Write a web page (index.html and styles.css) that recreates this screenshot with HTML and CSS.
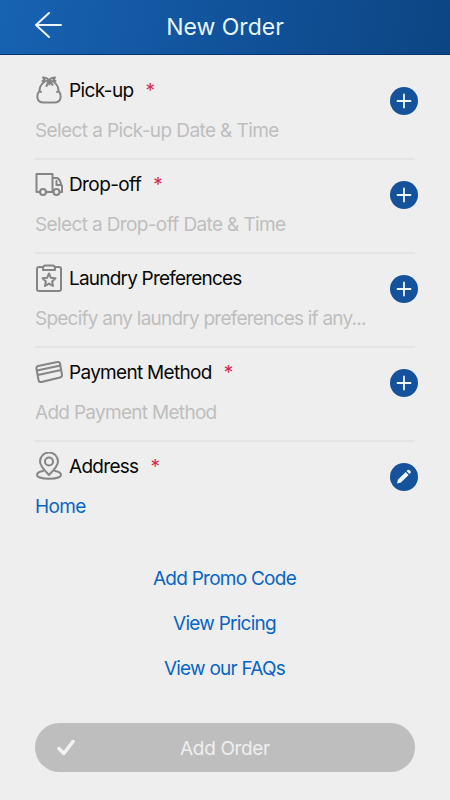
FILE: index.html
```html
<!DOCTYPE html>
<html lang="en">
<head>
<meta charset="utf-8">
<title>New Order</title>
<link rel="stylesheet" href="styles.css">
</head>
<body>
<header class="header">
  <svg class="back" viewBox="0 0 28 28"><path d="M15 2 2 14l13 12M2 14h25"/></svg>
  <h1>New Order</h1>
</header>
<main>
  <section class="row">
    <div class="title">
      <svg class="icon" viewBox="0 0 28 28"><path d="M9.500 6C6 8 4.500 10 4.500 15 2.500 17 2 19 2.500 22q1 4.500 6 4.500h11q5 0 6-4.500c.5-3 0-5-2-7C23.500 10 22 8 18.500 6M4.500 15l1.500 1M23.500 15 22 16M14 4Q11 1 8 1.500l1.500 2L7.500 5q3 1 6.500-1Q17 1 20 1.500L18.500 3.500 20.500 5q-3 1-6.500-1M14 4l-2.500 6M14 4l.5 4.500M14.500 4l3 5"/></svg>
      <h2>Pick-up</h2><span class="required">*</span>
    </div>
    <p class="hint">Select a Pick-up Date &amp; Time</p>
    <button class="action" aria-label="Add"><svg viewBox="0 0 28 28"><path d="M14 7.500v13M7.500 14h13"/></svg></button>
  </section>
  <section class="row">
    <div class="title">
      <svg class="icon" viewBox="0 0 28 28"><path d="M5 22H1.500V4h16v18H11M17.500 8H22q3 1 4 6l1 2v6h-2M17.500 22v-4M21.500 11v4H26"/><circle cx="8" cy="22" r="3"/><circle cx="21.500" cy="22" r="3"/></svg>
      <h2>Drop-off</h2><span class="required">*</span>
    </div>
    <p class="hint dropoff-hint">Select a Drop-off Date &amp; Time</p>
    <button class="action" aria-label="Add"><svg viewBox="0 0 28 28"><path d="M14 7.500v13M7.500 14h13"/></svg></button>
  </section>
  <section class="row">
    <div class="title">
      <svg class="icon" viewBox="0 0 28 28"><path d="M8 3H4Q2 3 2 5v20q0 2 2 2h20q2 0 2-2V5q0-2-2-2h-4M8 4q0-2.500 2.500-2.500h7Q20 1.500 20 4v2H8ZM14 9.500l1.900 4.300 4.600.5-3.400 3.100.9 4.600-4-2.400-4 2.400.9-4.600-3.400-3.100 4.600-.5Z"/></svg>
      <h2 class="preferences-title">Laundry Preferences</h2>
    </div>
    <p class="hint preferences-hint">Specify any laundry preferences if any...</p>
    <button class="action" aria-label="Add"><svg viewBox="0 0 28 28"><path d="M14 7.500v13M7.500 14h13"/></svg></button>
  </section>
  <section class="row">
    <div class="title">
      <svg class="icon" viewBox="0 0 28 28"><path d="m3 8 19.500-4q2-.5 2.500 1.500L27 17q0 2-2 2.500L6.500 24q-2.500.5-3-2L1.500 11Q1 8.500 3 8ZM2 12.500l23.500-5M3 17l23-5"/></svg>
      <h2 class="payment-title">Payment Method</h2><span class="required">*</span>
    </div>
    <p class="hint payment-hint">Add Payment Method</p>
    <button class="action" aria-label="Add"><svg viewBox="0 0 28 28"><path d="M14 7.500v13M7.500 14h13"/></svg></button>
  </section>
  <section class="row">
    <div class="title">
      <svg class="icon" viewBox="0 0 28 28"><path d="M14 23Q5 14 5 9.500a9 9 0 0 1 18 0Q23 14 14 23ZM8 19c-3 .5-6 1.500-6 4 0 5 24 5 24 0 0-2.500-3-3.500-6-4"/><circle cx="14" cy="9.500" r="4"/></svg>
      <h2 class="address-title">Address</h2><span class="required">*</span>
    </div>
    <p class="hint value">Home</p>
    <button class="action" aria-label="Edit"><svg viewBox="0 0 28 28"><path class="pencil" d="m7 20.500 1-4 7.700-7.500 2.900 2.900-7.600 7.600ZM16.600 8.100l1-1q1-.8 2 .1l.8.8q.9 1 .1 2l-1 1Z"/></svg></button>
  </section>
  <nav class="links">
    <a>Add Promo Code</a>
    <a>View Pricing</a>
    <a>View our FAQs</a>
  </nav>
  <button class="submit">
    <svg viewBox="0 0 18 18"><path d="m2 10.500 4.800 5L16 3.500"/></svg>
    <span>Add Order</span>
  </button>
</main>
</body>
</html>
```
FILE: styles.css
```css
* { box-sizing: border-box; }
body {
  margin: 0;
  height: 800px;
  overflow: hidden;
  background: #eee;
  color: #080808;
  font-family: Inter, "Liberation Sans", sans-serif;
  font-size: 19px;
  letter-spacing: -0.6px;
}
h1, h2, p { margin: 0; font-weight: 400; white-space: nowrap; }
svg { fill: none; stroke-linecap: round; stroke-linejoin: round; flex: none; }
button { border: 0; padding: 0; font: inherit; letter-spacing: inherit; }
.header {
  display: grid;
  grid-template-columns: 34px 1fr 34px;
  height: 55px;
  padding: 11px 34px 0;
  background: linear-gradient(100deg, #1762b2, #105096 60%, #0d4583);
  border-bottom: 1px solid #07346f;
}
.back { width: 28px; height: 28px; stroke: #e9f6ff; stroke-width: 2; }
.header h1 {
  color: #e9f6ff;
  text-align: center;
  font-size: 23px;
  line-height: 32px;
  letter-spacing: 0;
}
main { padding: 12px 34px 0 35px; }
.row {
  display: grid;
  grid-template-columns: 1fr 28px;
  grid-template-rows: 48px 32px;
  height: 94px;
  margin-right: -2px;
  background: linear-gradient(#e4e4e4, #e4e4e4) left bottom 1px / 380px 2px no-repeat;
}
.row:nth-of-type(5) { background: none; }
.title { display: flex; align-items: center; padding-bottom: 1px; }
.icon { width: 28px; height: 28px; margin-bottom: 2px; stroke: #858585; stroke-width: 2; }
h2 { margin-left: 6px; padding-top: 1px; font-size: 19px; line-height: 28px; }
.preferences-title { letter-spacing: -0.8px; }
.payment-title { letter-spacing: -0.7px; }
.address-title { letter-spacing: -0.7px; }
.required { margin-left: 12px; color: #d52b50; line-height: 28px; }
.hint { grid-column: 1; grid-row: 2; color: #bebebe; line-height: 32px; }
.dropoff-hint { letter-spacing: -0.63px; }
.preferences-hint { letter-spacing: -0.77px; }
.payment-hint { letter-spacing: -0.7px; }
.value { color: #0965c4; }
.action {
  grid-column: 2;
  grid-row: 1 / 3;
  width: 28px;
  height: 28px;
  margin-top: 19.500px;
  border-radius: 50%;
  background: #14539b;
}
.action svg { display: block; width: 28px; height: 28px; stroke: #eff9ff; stroke-width: 1.8; }
.action .pencil { fill: #eff9ff; stroke: none; }
.links { display: flex; flex-direction: column; align-items: center; margin: 19px 0 0; width: 379px; }
.links a { height: 45.200px; line-height: 45px; color: #0965c4; letter-spacing: -0.75px; }
.submit {
  display: grid;
  grid-template-columns: 18px 1fr 18px;
  align-items: center;
  width: 380px;
  height: 49px;
  margin-top: 31.400px;
  padding: 0 22px;
  border-radius: 25px;
  background: #bebebe;
  color: #efefef;
  letter-spacing: -0.35px;
}
.submit span { padding-top: 2px; }
.submit svg { width: 18px; height: 18px; stroke: #f3f3f3; stroke-width: 3.500; }
```
